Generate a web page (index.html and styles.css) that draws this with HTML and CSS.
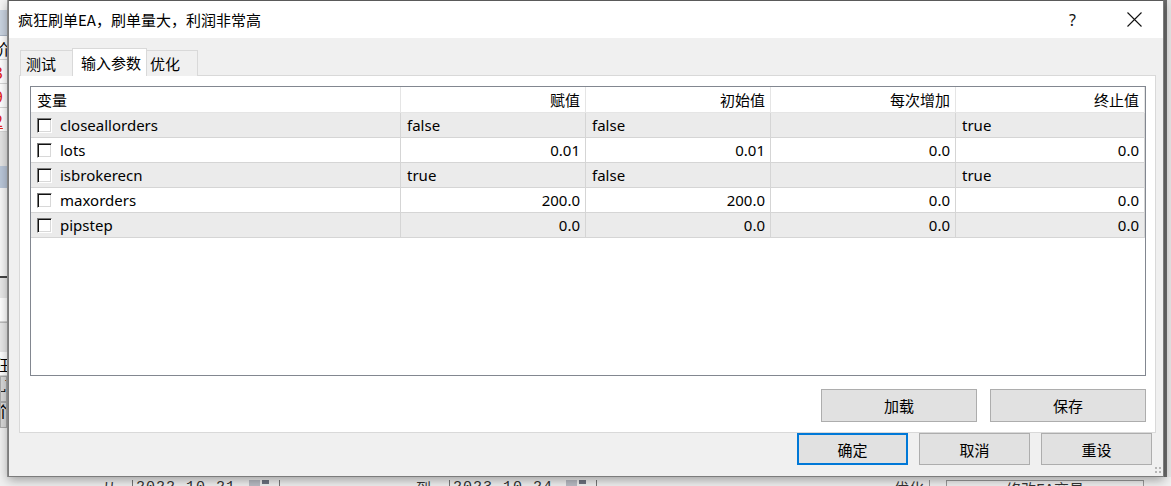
FILE: index.html
```html
<!DOCTYPE html>
<html lang="zh-CN">
<head>
    <meta charset="UTF-8">
    <meta name="viewport" content="width=device-width, initial-scale=1.0">
    <title>疯狂刷单EA</title>
    <link rel="stylesheet" href="styles.css">
</head>
<body>
    <div class="desktop">
        <!-- terminal window behind the dialog -->
        <div class="app">
            <div class="app-left">
                <div class="strip s-light"></div>
                <div class="strip s-blue"></div>
                <div class="strip s-cell">价</div>
                <div class="strip s-cell red">3</div>
                <div class="strip s-cell red">9</div>
                <div class="strip s-cell red under">2</div>
                <div class="strip s-gray"></div>
                <div class="strip s-blue2"></div>
                <div class="strip s-white"></div>
                <div class="strip s-line"></div>
                <div class="strip s-gray2"></div>
                <div class="strip s-cell">-</div>
                <div class="strip s-gray3"></div>
                <div class="strip s-cell">狂</div>
                <div class="strip s-box">LU</div>
                <div class="strip s-box">个</div>
            </div>
            <div class="app-mid"></div>
            <div class="app-right"></div>
            <div class="app-bottom">
                <span class="lbl from">从:</span>
                <span class="date">2022.10.21</span>
                <span class="cal"></span>
                <span class="lbl to">到:</span>
                <span class="date">2023.10.24</span>
                <span class="cal"></span>
                <span class="lbl opt">优化</span>
                <span class="edit-btn">修改EA交易</span>
            </div>
        </div>

        <div class="dialog">
            <div class="titlebar">
                <span class="title">疯狂刷单EA，刷单量大，利润非常高</span>
                <span class="help">?</span>
                <span class="close">
                    <svg width="15" height="15" viewBox="0 0 15 15">
                        <path d="M0.5 0.5 L14.5 14.5 M14.5 0.5 L0.5 14.5" stroke="#111" stroke-width="1.1" fill="none"/>
                    </svg>
                </span>
            </div>

            <div class="dialog-body">
                <div class="tabs">
                    <div class="tab">测试</div>
                    <div class="tab active">输入参数</div>
                    <div class="tab">优化</div>
                </div>

                <div class="panel">
                    <div class="list">
                        <div class="row head">
                            <div class="cell">变量</div>
                            <div class="cell num">赋值</div>
                            <div class="cell num">初始值</div>
                            <div class="cell num">每次增加</div>
                            <div class="cell num">终止值</div>
                        </div>
                        <div class="row odd">
                            <div class="cell name"><span class="check"></span>closeallorders</div>
                            <div class="cell">false</div>
                            <div class="cell">false</div>
                            <div class="cell"></div>
                            <div class="cell">true</div>
                        </div>
                        <div class="row">
                            <div class="cell name"><span class="check"></span>lots</div>
                            <div class="cell num">0.01</div>
                            <div class="cell num">0.01</div>
                            <div class="cell num">0.0</div>
                            <div class="cell num">0.0</div>
                        </div>
                        <div class="row odd">
                            <div class="cell name"><span class="check"></span>isbrokerecn</div>
                            <div class="cell">true</div>
                            <div class="cell">false</div>
                            <div class="cell"></div>
                            <div class="cell">true</div>
                        </div>
                        <div class="row">
                            <div class="cell name"><span class="check"></span>maxorders</div>
                            <div class="cell num">200.0</div>
                            <div class="cell num">200.0</div>
                            <div class="cell num">0.0</div>
                            <div class="cell num">0.0</div>
                        </div>
                        <div class="row odd">
                            <div class="cell name"><span class="check"></span>pipstep</div>
                            <div class="cell num">0.0</div>
                            <div class="cell num">0.0</div>
                            <div class="cell num">0.0</div>
                            <div class="cell num">0.0</div>
                        </div>
                    </div>

                    <div class="panel-buttons">
                        <button class="btn wide">加载</button>
                        <button class="btn wide">保存</button>
                    </div>
                </div>

                <div class="dialog-buttons">
                    <button class="btn default">确定</button>
                    <button class="btn">取消</button>
                    <button class="btn">重设</button>
                </div>
            </div>

            <div class="grip"></div>
        </div>
    </div>
</body>
</html>
```

FILE: styles.css
```css
* {
    margin: 0;
    padding: 0;
    box-sizing: border-box;
}

body {
    background-color: #f0f0f0;
    font-family: "Noto Sans", "Noto Sans CJK SC", sans-serif;
    font-size: 15px;
    color: #000;
}

.desktop {
    position: relative;
    width: 1171px;
    height: 486px;
    overflow: hidden;
}

/* ---------- background terminal ---------- */

.app {
    display: grid;
    grid-template-columns: 8px 1fr 7px;
    grid-template-rows: 477px 9px;
    height: 486px;
    background-color: #f0f0f0;
}

.app-left {
    display: flex;
    flex-direction: column;
    overflow: hidden;
    border-right: 1px solid #a0a0a0;
}

.strip {
    flex-shrink: 0;
    overflow: hidden;
    font-family: "Noto Sans CJK SC", sans-serif;
    font-size: 16px;
    line-height: 20px;
    text-indent: -6px;
}

.s-light { height: 10px; background-color: #f4f4f4; }
.s-blue { height: 26px; background-color: #c9d3e0; border-bottom: 1px solid #a9b5c5; }
.s-cell { height: 24px; background-color: #fff; border-bottom: 1px solid #d6d6d6; padding-top: 2px; }
.s-cell.red { color: #e02020; }
.s-cell.under { text-decoration: underline; }
.s-gray { height: 34px; background-color: #e3e3e3; }
.s-blue2 { height: 22px; background-color: #b9c6d8; }
.s-white { height: 88px; background-color: #f7f7f7; }
.s-line { height: 2px; background-color: #444; }
.s-gray2 { height: 20px; background-color: #e8e8e8; }
.s-gray3 { height: 30px; background-color: #e8e8e8; border-top: 1px solid #bbb; }
.s-box { height: 26px; background-color: #d8d8d8; border: 1px solid #aaa; font-family: "DejaVu Serif", serif; }

.app-mid {
    background-color: #f0f0f0;
}

.app-right {
    border-left: 3px solid #6d6d6d;
    background-color: #e6e6e6;
}

.app-bottom {
    grid-column: 1 / 4;
    display: flex;
    align-items: flex-start;
    overflow: hidden;
    font-family: "Noto Sans CJK SC", sans-serif;
    font-size: 15px;
    line-height: 15px;
    color: #333;
    padding-top: 3px;
}

.app-bottom .lbl { flex-shrink: 0; }
.app-bottom .from { margin-left: 102px; width: 30px; }
.app-bottom .to { margin-left: 136px; width: 33px; }
.app-bottom .opt { margin-left: 297px; width: 36px; border-right: 1px solid #999; height: 12px; }

.app-bottom .date {
    width: 116px;
    border-left: 1px solid #777;
    padding-left: 3px;
    font-family: "Liberation Mono", monospace;
    letter-spacing: 1px;
    height: 12px;
}

.app-bottom .cal {
    width: 32px;
    height: 10px;
    border-right: 1px solid #777;
    background:
        linear-gradient(#6e7380, #6e7380) 14px 0 / 7px 4px no-repeat,
        linear-gradient(#b9bcc4, #b9bcc4) 1px 0 / 11px 8px no-repeat;
}

.app-bottom .edit-btn {
    margin-left: 16px;
    width: 198px;
    height: 12px;
    border: 1px solid #999;
    border-bottom: none;
    text-align: center;
}

/* ---------- dialog window ---------- */

.dialog {
    position: absolute;
    left: 8px;
    top: 0;
    width: 1156px;
    height: 477px;
    display: flex;
    flex-direction: column;
    background-color: #f0f0f0;
    border: 1px solid #7c7c7c;
    border-top-color: #5a5a5a;
    box-shadow: 0 3px 10px rgba(0, 0, 0, 0.35);
}

.titlebar {
    height: 37px;
    display: flex;
    align-items: center;
    background-color: #fff;
    padding-left: 9px;
    font-family: "Noto Sans CJK SC", sans-serif;
    font-size: 15px;
}

.title {
    flex: 1;
}

.help {
    font-family: "Noto Sans", sans-serif;
    font-size: 16px;
    width: 58px;
    color: #111;
}

.close {
    width: 36px;
    display: flex;
    align-items: center;
}

.dialog-body {
    flex: 1;
    padding: 10px 7px 0 10px;
    display: flex;
    flex-direction: column;
}

.tabs {
    display: flex;
    align-items: flex-end;
    padding-left: 1px;
    height: 28px;
    margin-bottom: -1px;
    position: relative;
    z-index: 1;
    font-family: "Noto Sans CJK SC", sans-serif;
}

.tab {
    height: 26px;
    padding-left: 5px;
    background-color: #f0f0f0;
    border: 1px solid #d9d9d9;
    border-bottom: none;
    line-height: 25px;
    font-size: 15px;
}

.tab:nth-child(1) { width: 52px; border-right: none; }
.tab:nth-child(3) { width: 51px; border-left: none; padding-left: 3px; }

.tab.active {
    height: 28px;
    width: 75px;
    background-color: #fff;
    padding-left: 8px;
    line-height: 27px;
}

.panel {
    height: 358px;
    background-color: #fff;
    border: 1px solid #d9d9d9;
    padding: 10px 9px 10px 10px;
    display: flex;
    flex-direction: column;
}

.list {
    height: 290px;
    border: 1px solid #828790;
    background-color: #fff;
}

.row {
    display: grid;
    grid-template-columns: 370px 185px 185px 185px 1fr;
    height: 25px;
    border-bottom: 1px solid #d5d5d5;
}

.row.head {
    height: 26px;
    border-bottom-color: #e5e5e5;
}

.row.odd {
    background-color: #ebebeb;
}

.cell {
    border-right: 1px solid #d5d5d5;
    padding: 0 5px 0 6px;
    line-height: 24px;
    white-space: nowrap;
    overflow: hidden;
}

.head .cell {
    border-right-color: #e5e5e5;
    font-family: "Noto Sans CJK SC", sans-serif;
    line-height: 25px;
}

.cell.num {
    text-align: right;
}

.cell.name {
    display: flex;
    align-items: center;
    gap: 8px;
}

.check {
    width: 15px;
    height: 15px;
    flex-shrink: 0;
    background-color: #fff;
    border-top: 1px solid #7a7a7a;
    border-left: 1px solid #7a7a7a;
    border-right: 1px solid #fff;
    border-bottom: 1px solid #fff;
    box-shadow: inset 1px 1px 0 #111, inset -1px -1px 0 #d8d8d8;
}

.panel-buttons {
    display: flex;
    justify-content: flex-end;
    gap: 13px;
    margin-top: 13px;
}

.btn {
    height: 33px;
    width: 111px;
    background-color: #e1e1e1;
    border: 1px solid #adadad;
    font-family: "Noto Sans CJK SC", sans-serif;
    font-size: 15px;
    color: #000;
}

.btn.wide {
    width: 156px;
}

.btn.default {
    border: 2px solid #0078d7;
}

.dialog-buttons {
    display: flex;
    justify-content: flex-end;
    gap: 11px;
    margin-right: 4px;
}

.dialog-buttons .btn {
    height: 32px;
}

.grip {
    position: absolute;
    right: 1px;
    bottom: 2px;
    width: 8px;
    height: 8px;
    background-image: radial-gradient(#b5b5b5 1px, transparent 1.5px);
    background-size: 4px 4px;
}
```
